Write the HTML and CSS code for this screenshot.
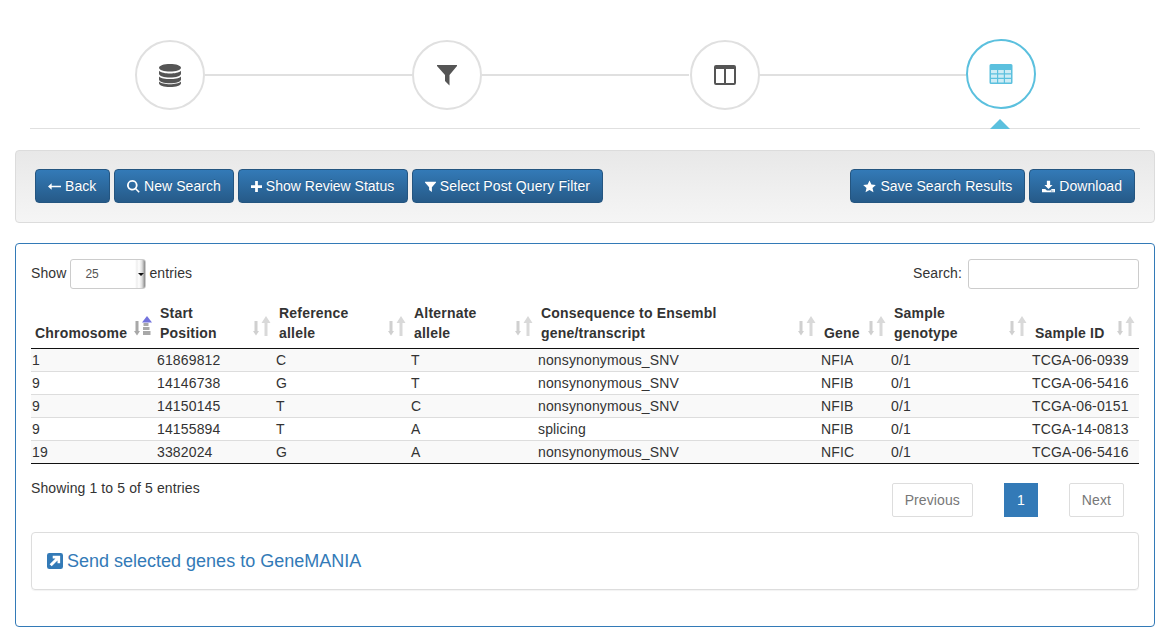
FILE: index.html
```html
<!DOCTYPE html>
<html lang="en">
<head>
    <meta charset="UTF-8">
    <meta name="viewport" content="width=device-width, initial-scale=1.0">
    <title>Search Results</title>
    <link rel="stylesheet" href="styles.css">
</head>
<body>
    <svg class="sprite" width="0" height="0">
        <symbol id="sort-icon" viewBox="0 0 18 20">
            <path class="sort-down" d="M1.500 5h3v10H6l-3 4.500L0 15h1.500z"/>
            <path class="sort-up" d="M13 0l4.500 7H14.500v13h-3V7H8.500z"/>
        </symbol>
        <symbol id="sort-asc-icon" viewBox="0 0 18 20">
            <path class="sort-down-on" d="M1.500 5h3v10H6l-3 4.500L0 15h1.500z"/>
            <path class="sort-up-on" d="M13 0l5 6.500H8z"/>
            <path class="sort-bars" d="M9.500 7h5v3h-5zM9 11h6.500v3H9zM9 15h7.500v4H9z"/>
        </symbol>
    </svg>
    <div class="wizard">
        <div class="step">
            <svg class="step-icon" viewBox="0 0 24 24"><path d="M12 1C6 1 1 2.600 1 4.800S6 8.600 12 8.600s11-1.600 11-3.800S18 1 12 1zM1 7.800v3c0 2.200 5 3.800 11 3.800s11-1.600 11-3.800v-3c-2 2-6.500 2.700-11 2.700S3 9.800 1 7.800zM1 13.400v3c0 2.200 5 3.800 11 3.800s11-1.600 11-3.800v-3c-2 2-6.500 2.700-11 2.700s-9-.7-11-2.700zM1 18.600v1.600C1 22.400 6 24 12 24s11-1.600 11-3.800v-1.600c-2 2-6.500 2.700-11 2.700s-9-.7-11-2.700z"/></svg>
        </div>
        <div class="step-line"></div>
        <div class="step">
            <svg class="step-icon" viewBox="0 0 24 24"><path d="M2 2h20v1L14.500 12v10.500L10 18v-6L2 3z"/></svg>
        </div>
        <div class="step-line"></div>
        <div class="step step-columns">
            <svg class="step-icon" viewBox="0 0 24 24"><path fill-rule="evenodd" d="M3 2h18a2 2 0 0 1 2 2v16a2 2 0 0 1-2 2H3a2 2 0 0 1-2-2V4a2 2 0 0 1 2-2zm0 4v14h8V6zm10 0v14h8V6z"/></svg>
        </div>
        <div class="step-line"></div>
        <div class="step active">
            <svg class="step-icon" viewBox="0 0 24 24">
                <rect class="table-cells" x="1" y="7" width="22" height="14"/>
                <path fill-rule="evenodd" d="M2 2h20a1.500 1.500 0 0 1 1.500 1.500v17A1.500 1.500 0 0 1 22 22H2a1.500 1.500 0 0 1-1.500-1.500v-17A1.500 1.500 0 0 1 2 2zM2 8v3.300h6V8zm7.200 0v3.300h5.600V8zM16 8v3.300h6V8zM2 12.500v3.300h6v-3.300zm7.200 0v3.300h5.600v-3.300zm6.800 0v3.300h6v-3.300zM2 17v3.500h6V17zm7.200 0v3.500h5.600V17zm6.800 0v3.500h6V17z"/>
            </svg>
        </div>
    </div>

    <div class="toolbar">
        <div class="btn-group">
            <button class="btn btn-back"><svg class="btn-icon" viewBox="0 0 16 16"><path d="M4.500 4v3.200H16v1.600H4.500V12L0 8z"/></svg>Back</button>
            <button class="btn"><svg class="btn-icon" viewBox="0 0 16 16"><path fill-rule="evenodd" d="M6.500 0a6.500 6.500 0 0 1 5.200 10.400l4 4-1.400 1.400-4-4A6.500 6.500 0 1 1 6.500 0zm0 2.200a4.300 4.300 0 1 0 0 8.600 4.300 4.300 0 0 0 0-8.600z"/></svg>New Search</button>
            <button class="btn btn-status"><svg class="btn-icon narrow" viewBox="0 0 16 16"><path d="M6 0h4v6h6v4h-6v6H6v-6H0V6h6z"/></svg>Show Review Status</button>
            <button class="btn btn-filter"><svg class="btn-icon narrow" viewBox="0 0 16 16"><path d="M0 1h16v1l-6 7v7l-4-3V9L0 2z"/></svg>Select Post Query Filter</button>
        </div>
        <div class="btn-group">
            <button class="btn"><svg class="btn-icon" viewBox="0 0 16 16"><path d="M8 .5l2.300 5 5.500.6-4.100 3.700 1.200 5.400L8 12.400l-4.900 2.800 1.200-5.400L.2 6.100l5.500-.6z"/></svg>Save Search Results</button>
            <button class="btn"><svg class="btn-icon" viewBox="0 0 16 16"><path fill-rule="evenodd" d="M6 1h4v5h3l-5 5-5-5h3zM0 11h4l2 2h4l2-2h4v4H0zm11 2v1h1v-1zm2 0v1h1v-1z"/></svg>Download</button>
        </div>
    </div>

    <div class="panel">
        <div class="table-top">
            <label>Show
                <span class="select-wrap"><select class="length-select"><option>25</option></select></span>
                entries</label>
            <label>Search:
                <input class="search-input" type="text"></label>
        </div>
        <table class="results">
            <colgroup>
                <col class="col-chrom"><col class="col-start"><col class="col-ref"><col class="col-alt">
                <col class="col-cons"><col class="col-gene"><col class="col-geno"><col class="col-sample">
            </colgroup>
            <thead>
                <tr>
                    <th>Chromosome<svg class="sort"><use href="#sort-asc-icon"/></svg></th>
                    <th>Start<br>Position<svg class="sort"><use href="#sort-icon"/></svg></th>
                    <th>Reference<br>allele<svg class="sort"><use href="#sort-icon"/></svg></th>
                    <th>Alternate<br>allele<svg class="sort"><use href="#sort-icon"/></svg></th>
                    <th>Consequence to Ensembl<br>gene/transcript<svg class="sort"><use href="#sort-icon"/></svg></th>
                    <th>Gene<svg class="sort"><use href="#sort-icon"/></svg></th>
                    <th>Sample<br>genotype<svg class="sort"><use href="#sort-icon"/></svg></th>
                    <th>Sample ID<svg class="sort"><use href="#sort-icon"/></svg></th>
                </tr>
            </thead>
            <tbody>
                <tr><td>1</td><td>61869812</td><td>C</td><td>T</td><td>nonsynonymous_SNV</td><td>NFIA</td><td>0/1</td><td>TCGA-06-0939</td></tr>
                <tr><td>9</td><td>14146738</td><td>G</td><td>T</td><td>nonsynonymous_SNV</td><td>NFIB</td><td>0/1</td><td>TCGA-06-5416</td></tr>
                <tr><td>9</td><td>14150145</td><td>T</td><td>C</td><td>nonsynonymous_SNV</td><td>NFIB</td><td>0/1</td><td>TCGA-06-0151</td></tr>
                <tr><td>9</td><td>14155894</td><td>T</td><td>A</td><td>splicing</td><td>NFIB</td><td>0/1</td><td>TCGA-14-0813</td></tr>
                <tr><td>19</td><td>3382024</td><td>G</td><td>A</td><td>nonsynonymous_SNV</td><td>NFIC</td><td>0/1</td><td>TCGA-06-5416</td></tr>
            </tbody>
        </table>
        <div class="table-bottom">
            <div class="table-info">Showing 1 to 5 of 5 entries</div>
            <div class="pagination">
                <a class="page-btn">Previous</a>
                <a class="page-btn current">1</a>
                <a class="page-btn">Next</a>
            </div>
        </div>
        <div class="send-box">
            <a class="send-link" href="#"><svg class="send-icon" viewBox="1 1 14 14"><path fill-rule="evenodd" d="M3 1h10a2 2 0 0 1 2 2v10a2 2 0 0 1-2 2H3a2 2 0 0 1-2-2V3a2 2 0 0 1 2-2zM6 3.500v2.300h2.400L3.300 10.900l1.800 1.800L10.200 7.600V10h2.300V3.500z"/></svg>Send selected genes to GeneMANIA</a>
        </div>
    </div>
</body>
</html>
```
FILE: styles.css
```css
body {
    margin: 0;
    padding: 0 16px 8px 15px;
    font-family: "Liberation Sans", Arial, sans-serif;
    font-size: 14px;
    line-height: 20px;
    color: #333;
    background-color: #fff;
}
.sprite {
    display: block;
}

/* wizard */
.wizard {
    display: flex;
    align-items: center;
    margin: 0 15px 21px;
    padding: 39px 104px 17px 105px;
    border-bottom: 1px solid #e0e0e0;
}
.step {
    position: relative;
    display: flex;
    flex: none;
    justify-content: center;
    align-items: center;
    box-sizing: border-box;
    width: 70px;
    height: 70px;
    border: 2px solid #e0e0e0;
    border-radius: 50%;
    background-color: #fff;
    color: #555;
}
.step-columns {
    margin: 0 -1px 0 1px;
}
.step-line {
    flex: 1;
    height: 2px;
    background-color: #e0e0e0;
}
.step-icon {
    width: 24px;
    height: 24px;
    fill: currentColor;
}
.table-cells {
    opacity: .3;
}
.step.active {
    margin-bottom: 2px;
    border-color: #5bc0de;
    color: #5bc0de;
}
.step.active::after {
    content: "";
    position: absolute;
    left: 22px;
    top: 78px;
    border-left: 10px solid transparent;
    border-right: 10px solid transparent;
    border-bottom: 10px solid #5bc0de;
}

/* toolbar */
.toolbar {
    display: flex;
    justify-content: space-between;
    box-sizing: border-box;
    height: 73px;
    margin-bottom: 20px;
    padding: 18px 19px;
    border: 1px solid #dcdcdc;
    border-radius: 4px;
    background-image: linear-gradient(to bottom, #e8e8e8 0, #f5f5f5 100%);
}
.btn-group {
    display: flex;
    gap: 4px;
}
.btn {
    display: flex;
    align-items: center;
    height: 34px;
    padding: 0 12px;
    border: 1px solid #245580;
    border-radius: 4px;
    background-image: linear-gradient(to bottom, #337ab7 0, #265a88 100%);
    color: #fff;
    font-family: inherit;
    font-size: 14px;
    letter-spacing: .06px;
    text-shadow: 0 -1px 0 rgba(0, 0, 0, .2);
    white-space: nowrap;
}
.btn-back {
    width: 75px;
}
.btn-status {
    width: 170px;
    letter-spacing: 0;
}
.btn-filter {
    width: 191px;
    letter-spacing: .1px;
}
.btn-icon {
    flex: none;
    width: 13px;
    height: 13px;
    margin-right: 4px;
    fill: #fff;
}
.btn-icon.narrow {
    width: 11px;
    height: 11px;
}

/* results panel */
.panel {
    box-sizing: border-box;
    height: 384px;
    padding: 15px;
    border: 1px solid #337ab7;
    border-radius: 4px;
}
.table-top {
    display: flex;
    justify-content: space-between;
    align-items: center;
    height: 30px;
    margin-bottom: 10px;
    letter-spacing: .1px;
}
.select-wrap {
    position: relative;
    display: inline-block;
    margin-right: -1px;
    vertical-align: middle;
}
.select-wrap::after {
    content: "";
    position: absolute;
    right: 2px;
    top: 14px;
    border-left: 3px solid transparent;
    border-right: 3px solid transparent;
    border-top: 3px solid #111;
}
.length-select {
    display: block;
    width: 76px;
    height: 30px;
    padding: 0 14px;
    border: 1px solid #ccc;
    border-radius: 3px;
    background-color: #fff;
    background-image: linear-gradient(to right, #fff 64px, #eee 66px, #fff 68px, #ddd 71px, #888 74px);
    color: #555;
    font-family: inherit;
    font-size: 12px;
    appearance: none;
}
.search-input {
    box-sizing: border-box;
    width: 171px;
    height: 30px;
    margin-left: 2px;
    border: 1px solid #ccc;
    border-radius: 3px;
    vertical-align: middle;
}
.results {
    width: 1108px;
    border-collapse: collapse;
    border-bottom: 1px solid #111;
    table-layout: fixed;
}
.col-chrom { width: 125px; }
.col-start { width: 119px; }
.col-ref { width: 135px; }
.col-alt { width: 127px; }
.col-cons { width: 283px; }
.col-gene { width: 70px; }
.col-geno { width: 141px; }
.col-sample { width: 108px; }
.results th {
    position: relative;
    padding: 4px 20px 5px 4px;
    border-bottom: 1px solid #111;
    letter-spacing: .2px;
    text-align: left;
    vertical-align: bottom;
}
.results td {
    box-sizing: border-box;
    height: 23px;
    padding: 0 1px;
    border-top: 1px solid #ddd;
    letter-spacing: .14px;
}
.results tbody tr:first-child td {
    border-top: 0;
}
.results tbody tr:nth-child(odd) {
    background-color: #f9f9f9;
}
.sort {
    position: absolute;
    right: 4px;
    bottom: 12px;
    width: 18px;
    height: 20px;
}
.sort-down {
    fill: #d0d0d0;
}
.sort-up {
    fill: #d9d9d9;
}
.sort-down-on,
.sort-bars {
    fill: #a8a8a8;
}
.sort-up-on {
    fill: #7373dd;
}
.table-bottom {
    display: flex;
    justify-content: space-between;
    height: 68px;
}
.table-info {
    padding-top: 14px;
    letter-spacing: .11px;
}
.pagination {
    display: flex;
    gap: 31px;
    padding: 19px 15px 0 0;
}
.page-btn {
    box-sizing: border-box;
    height: 34px;
    padding: 6px 12px;
    border: 1px solid #ddd;
    border-radius: 2px;
    color: #777;
    letter-spacing: .1px;
}
.page-btn.current {
    border-color: #337ab7;
    border-radius: 0;
    background-color: #337ab7;
    color: #fff;
}
.send-box {
    box-sizing: border-box;
    height: 58px;
    padding: 15px;
    border: 1px solid #ddd;
    border-radius: 4px;
    box-shadow: 0 1px 1px rgba(0, 0, 0, .05);
}
.send-link {
    display: flex;
    align-items: center;
    color: #337ab7;
    font-size: 18px;
    line-height: 26px;
    text-decoration: none;
}
.send-icon {
    width: 16px;
    height: 16px;
    margin-right: 4px;
    fill: #337ab7;
}
```
